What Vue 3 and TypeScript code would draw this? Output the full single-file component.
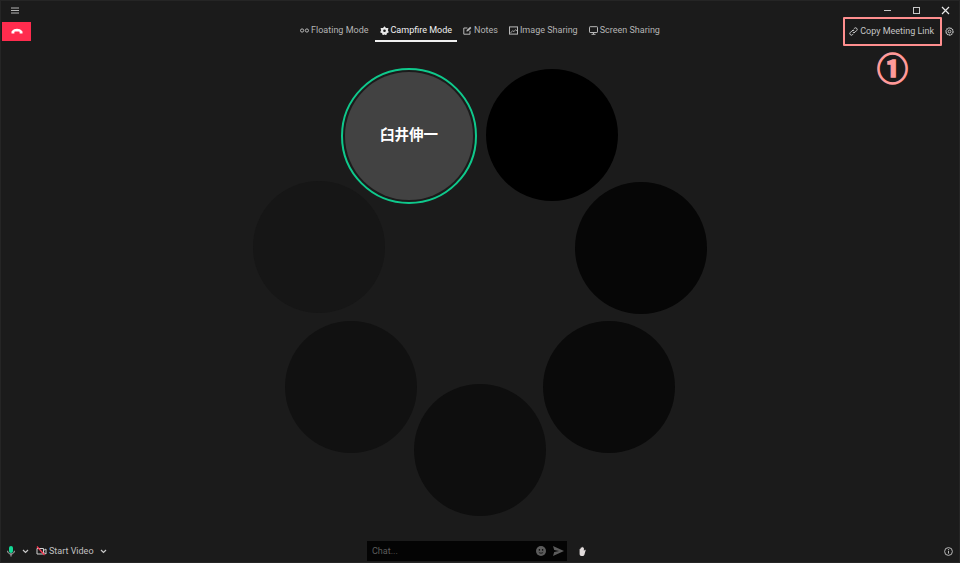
<script setup lang="ts">
// Meeting window in campfire mode: the seats sit on a free canvas, the bars are plain flow.
interface Seat {
  x: number
  y: number
  fill: string
}

const seats: Seat[] = [
  { x: 486, y: 69, fill: '#000' },
  { x: 575, y: 182, fill: '#060606' },
  { x: 543, y: 321, fill: '#0a0a0a' },
  { x: 414, y: 384, fill: '#0e0e0e' },
  { x: 285, y: 321, fill: '#111' },
  { x: 253, y: 181, fill: '#161616' },
]
</script>

<template>
  <div class="win">
    <div class="titlebar">
      <svg class="menu" width="8" height="7" viewBox="0 0 8 7"><path d="M0 1h8M0 3.5h8M0 6h8" stroke="#b5b5b5" stroke-width="1" /></svg>
      <div class="win-btns">
        <svg width="9" height="9" viewBox="0 0 9 9"><path d="M1 4.5h7" stroke="#c8c8c8" /></svg>
        <svg width="9" height="9" viewBox="0 0 9 9"><rect x="1.5" y="1.5" width="6" height="6" fill="none" stroke="#c8c8c8" /></svg>
        <svg width="9" height="9" viewBox="0 0 9 9"><path d="M1 1l7 7M8 1l-7 7" stroke="#e8e8e8" stroke-width="1.200" /></svg>
      </div>
    </div>

    <div class="toolbar">
      <div class="left">
        <button class="hangup">
          <svg width="12" height="6" viewBox="0 0 12 6"><path d="M0.5 5.500V3.600C2 1.400 4 .8 6 .8s4 .6 5.500 2.800v1.900H8.600V3.800C7.600 3.300 4.400 3.300 3.400 3.800v1.700z" fill="#fff" /></svg>
        </button>
      </div>
      <nav class="tabs">
        <a class="tab">
          <svg width="9" height="9" viewBox="0 0 9 9"><circle cx="2.100" cy="4.500" r="1.600" fill="none" stroke="#b8b8b8" /><circle cx="6.900" cy="4.500" r="1.600" fill="none" stroke="#b8b8b8" /></svg>
          Floating Mode
        </a>
        <a class="tab active">
          <svg width="9" height="9" viewBox="0 0 9 9"><path d="M4.500.3l1.500 1.800 2.400-.1-.5 2.500 1 1.700-2 1-.6 2.100-1.800-.9-1.800.9-.6-2.100-2-1 1-1.700L.6 2l2.400.1z" fill="#e8e8e8" /><circle cx="4.500" cy="4.800" r="1.300" fill="#1a1a1a" /></svg>
          Campfire Mode
        </a>
        <a class="tab">
          <svg width="9" height="9" viewBox="0 0 9 9"><path d="M7 4.800v3.400H.8V2h3.600" fill="none" stroke="#b8b8b8" /><path d="M3.400 5.600l.3-1.500L7.200.7l1.200 1.200L5 5.300z" fill="#b8b8b8" /></svg>
          Notes
        </a>
        <a class="tab">
          <svg width="9" height="9" viewBox="0 0 9 9"><rect x=".5" y=".9" width="8" height="7.200" fill="none" stroke="#b8b8b8" /><path d="M1.500 7l2.200-2.400 1.200 1.100L6.600 3.600 8 5" fill="none" stroke="#b8b8b8" stroke-width=".8" /></svg>
          Image Sharing
        </a>
        <a class="tab">
          <svg width="9" height="9" viewBox="0 0 9 9"><rect x=".5" y=".7" width="8" height="5.800" rx=".6" fill="none" stroke="#b8b8b8" /><path d="M2.500 8.300h4M4.500 6.500v1.800" stroke="#b8b8b8" /></svg>
          Screen Sharing
        </a>
      </nav>
      <div class="right">
        <a class="copy">
          <svg width="9" height="9" viewBox="0 0 9 9"><path d="M3.800 5.200a1.500 1.500 0 0 0 2.200 0l1.700-1.700a1.550 1.550 0 0 0-2.200-2.200l-.8.8M5.200 3.800a1.500 1.500 0 0 0-2.200 0L1.300 5.500a1.550 1.550 0 0 0 2.200 2.200l.8-.8" fill="none" stroke="#d0d0d0" stroke-width="1" /></svg>
          Copy Meeting Link
        </a>
        <svg class="gear" width="9" height="9" viewBox="0 0 9 9"><circle cx="4.500" cy="4.500" r="3.500" fill="none" stroke="#c4c4c4" stroke-width="1.300" stroke-dasharray="1.600 .5" /><circle cx="4.500" cy="4.500" r="1.400" fill="none" stroke="#c4c4c4" stroke-width="1" /></svg>
      </div>
    </div>

    <main class="stage">
      <div class="me">
        <div class="me-inner"><span>臼井伸一</span></div>
      </div>
      <div
        v-for="s in seats"
        :key="s.x"
        class="seat"
        :style="{ left: s.x + 'px', top: s.y + 'px', background: s.fill }"
      />
    </main>

    <div class="bottombar">
      <div class="media">
        <svg class="mic" width="8" height="11" viewBox="0 0 8 11"><rect x="2" y="0" width="4" height="7" rx="2" fill="#13d996" /><path d="M.6 4.800c0 2 1.400 3.200 3.400 3.200s3.400-1.200 3.400-3.200M4 8v2.500" fill="none" stroke="#c8c8c8" stroke-width=".9" /></svg>
        <svg class="chev c1" width="7" height="5" viewBox="0 0 7 5"><path d="M1 1l2.500 2.500L6 1" fill="none" stroke="#c8c8c8" stroke-width="1.200" /></svg>
        <svg class="cam" width="11" height="10" viewBox="0 0 11 10"><path d="M1 2.500h6.500v5.500H1zM7.500 4.500L10 3v5L7.500 6.500" fill="none" stroke="#d0d0d0" /><path d="M1 .5l7.500 8.500" stroke="#ff3b56" stroke-width="1.200" /></svg>
        <span class="start">Start Video</span>
        <svg class="chev" width="7" height="5" viewBox="0 0 7 5"><path d="M1 1l2.500 2.500L6 1" fill="none" stroke="#c8c8c8" stroke-width="1.200" /></svg>
      </div>
      <div class="chat-wrap">
        <div class="chat">
          <span class="ph">Chat...</span>
          <svg width="10" height="10" viewBox="0 0 10 10"><circle cx="5" cy="5" r="5" fill="#5c5c5c" /><circle cx="3.400" cy="3.900" r=".8" fill="#0a0a0a" /><circle cx="6.600" cy="3.900" r=".8" fill="#0a0a0a" /><path d="M2.800 6.200c.8 1.300 3.600 1.300 4.400 0" fill="none" stroke="#0a0a0a" stroke-width=".8" /></svg>
          <svg width="11" height="10" viewBox="0 0 11 10"><path d="M0 0l11 5-11 5 1.200-4L6 5 1.200 4z" fill="#5c5c5c" /></svg>
        </div>
        <svg class="hand" width="9" height="10" viewBox="0 0 9 10"><path d="M1.600 3.400c0-.8 1-.8 1 0V2c0-.8 1.100-.8 1.100 0v-.6c0-.8 1.100-.8 1.100 0V2c0-.7 1.100-.7 1.100 0v3l.7-1c.5-.7 1.400 0 1 .6L6.400 8.700C6 9.500 5.400 10 4.500 10H3.500C2.300 10 1.600 9 1.600 8z" fill="#e2dcdc" /></svg>
      </div>
      <div class="info-wrap">
        <svg width="9" height="9" viewBox="0 0 9 9"><circle cx="4.500" cy="4.500" r="3.900" fill="none" stroke="#b8b8b8" /><path d="M4.500 4v2.600" stroke="#b8b8b8" /><circle cx="4.500" cy="2.700" r=".6" fill="#b8b8b8" /></svg>
      </div>
    </div>

    <div class="callout">
      <div class="callout-box" />
      <div class="callout-num">①</div>
    </div>
  </div>
</template>

<style>
html,
body {
  margin: 0;
  background: #1b1b1b;
}
</style>

<style scoped>
.win {
  position: relative;
  width: 960px;
  height: 563px;
  box-sizing: border-box;
  display: flex;
  flex-direction: column;
  background: #1b1b1b;
  border: 1px solid #252525;
  overflow: hidden;
  font-family: Roboto, 'Noto Sans CJK JP', sans-serif;
  font-size: 9px;
  color: #b4b4b4;
}
.titlebar {
  flex: none;
  height: 19px;
  display: flex;
  align-items: center;
  justify-content: space-between;
  padding: 0 9px 0 10px;
}
.menu {
  display: block;
}
.win-btns {
  display: flex;
  gap: 20px;
  margin-top: 0;
}
.win-btns svg {
  display: block;
}
.toolbar {
  flex: none;
  height: 22px;
  display: grid;
  grid-template-columns: 1fr auto 1fr;
  align-items: center;
}
.left {
  display: flex;
}
.hangup {
  width: 29px;
  height: 19px;
  margin-left: 1px;
  padding: 0;
  border: 0;
  background: #ff2c4e;
  display: flex;
  align-items: center;
  justify-content: center;
}
.tabs {
  display: flex;
  align-items: center;
  height: 22px;
  gap: 1px;
}
.tab {
  height: 22px;
  box-sizing: border-box;
  padding: 0 5px;
  display: flex;
  align-items: center;
  gap: 2px;
  white-space: nowrap;
  border-bottom: 2px solid transparent;
}
.tab.active {
  color: #f0f0f0;
  border-bottom-color: #f0f0f0;
}
.right {
  display: flex;
  align-items: center;
  justify-content: flex-end;
  gap: 11px;
  padding-right: 5px;
}
.copy {
  display: flex;
  align-items: center;
  gap: 2px;
  white-space: nowrap;
  color: #c4c4c4;
}
.stage {
  position: relative;
  flex: 1;
  min-height: 0;
}
.me {
  position: absolute;
  left: 340px;
  top: 26px;
  width: 136px;
  height: 136px;
  box-sizing: border-box;
  border: 2px solid #0fc98c;
  border-radius: 50%;
  padding: 2px;
}
.me-inner {
  width: 100%;
  height: 100%;
  border-radius: 50%;
  background: #424242;
  display: flex;
  align-items: center;
  justify-content: center;
  color: #fff;
  font-size: 14.500px;
  font-weight: 700;
}
.me-inner span {
  margin-top: -6px;
}
.seat {
  position: absolute;
  width: 132px;
  height: 132px;
  margin: -42px 0 0 -1px;
  border-radius: 50%;
}
.bottombar {
  flex: none;
  height: 24px;
  box-sizing: border-box;
  padding-top: 2px;
  display: grid;
  grid-template-columns: 1fr auto 1fr;
  align-items: center;
}
.media {
  display: flex;
  align-items: center;
  padding-left: 6px;
  color: #c0c0c0;
}
.media svg {
  display: block;
}
.c1 {
  margin: 0 7px 0 7px;
}
.start {
  margin: 0 6px 0 2px;
}
.chat-wrap {
  display: flex;
  align-items: center;
}
.chat {
  width: 200px;
  height: 20px;
  box-sizing: border-box;
  padding: 0 3px 0 5px;
  display: flex;
  align-items: center;
  gap: 7px;
  background: #040404;
}
.ph {
  flex: 1;
  color: #5c5c5c;
}
.hand {
  margin-left: 11px;
  margin-right: 6px;
}
.info-wrap {
  display: flex;
  justify-content: flex-end;
  padding-right: 6px;
}
.callout {
  position: absolute;
  left: 842px;
  top: 16px;
  width: 99px;
  height: 70px;
}
.callout-box {
  width: 99px;
  height: 29px;
  box-sizing: border-box;
  border: 2px solid #ff8f8f;
  border-radius: 1px;
}
.callout-num {
  margin-top: 1px;
  text-align: center;
  font-family: 'Noto Sans CJK JP', sans-serif;
  font-size: 31px;
  font-weight: 700;
  line-height: 40px;
  color: #ff9a9a;
  -webkit-text-stroke: 1.300px #ff9a9a;
}
</style>
